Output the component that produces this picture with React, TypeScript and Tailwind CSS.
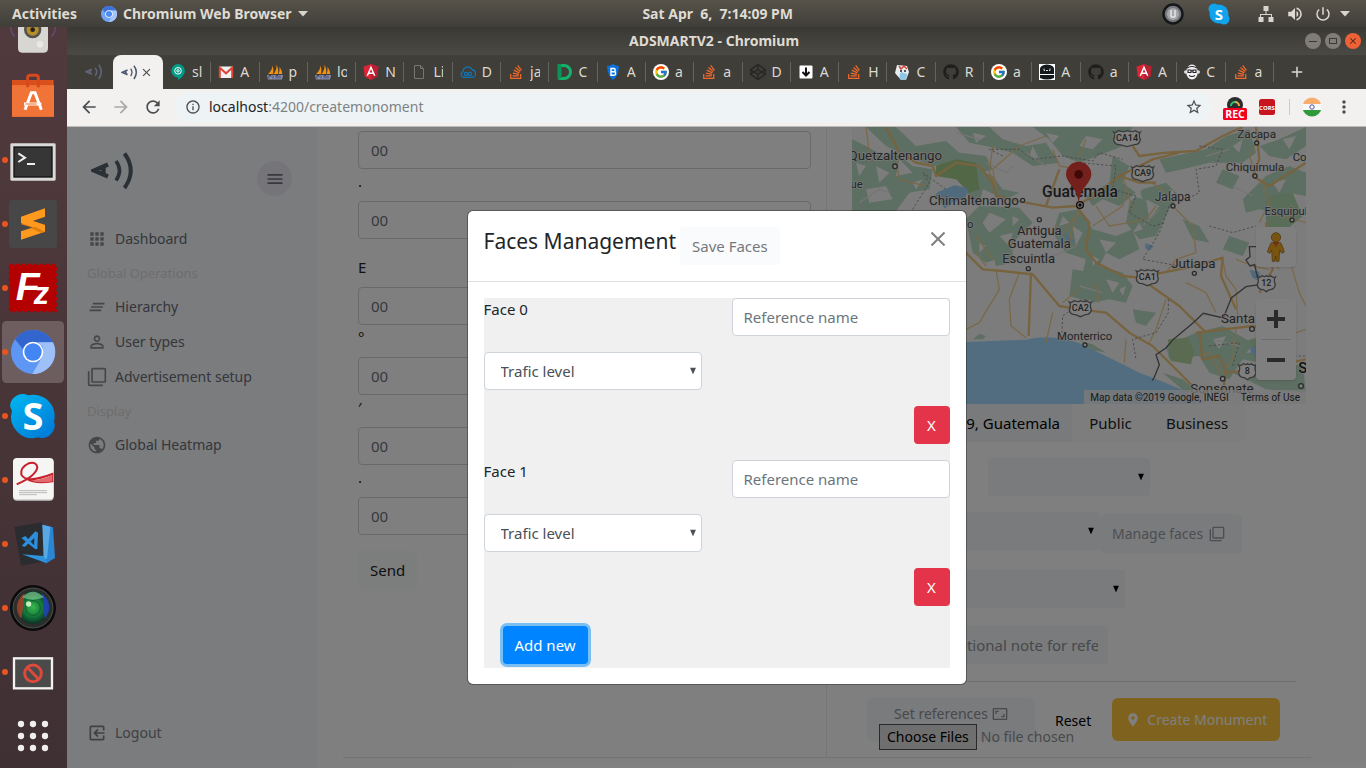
import React from "react";
import {
  MdApps,
  MdAspectRatio,
  MdClearAll,
  MdExitToApp,
  MdFilterNone,
  MdLocationOn,
  MdMenu,
  MdPersonOutline,
  MdPublic,
  MdArrowBack,
  MdArrowForward,
  MdRefresh,
  MdStarBorder,
  MdMoreVert,
  MdInfoOutline,
  MdVolumeUp,
  MdPowerSettingsNew,
  MdClose,
  MdAdd,
} from "react-icons/md";
import { FaStackOverflow, FaGithub, FaCodepen } from "react-icons/fa";
import { FcGoogle } from "react-icons/fc";

/* ---------- favicons ---------- */

const WaveMark = ({ className }: { className: string }) => (
  <svg viewBox="0 0 44 40" className={className} fill="none" stroke="currentColor">
    <path d="M17 13.500 3 19.500 17 25.500M12.500 16V23" strokeWidth="4.400" />
    <path d="M25 10 Q32 19.500 25 29.500" strokeWidth="3.600" />
    <path d="M33.500 2.500 Q46 19.500 33.500 37" strokeWidth="4" />
  </svg>
);

const Angular = () => (
  <svg viewBox="0 0 16 16" className="size-4">
    <path d="M8 0 15.500 2.700 14.300 12.500 8 16 1.700 12.500 .5 2.700Z" fill="#dd2437" />
    <path d="M8 0 15.500 2.700 14.300 12.500 8 16Z" fill="#b81f33" />
    <path d="M4.300 11.700 8 3.300 11.700 11.700M5.800 9.200H10.200" stroke="#fff" strokeWidth="1.500" fill="none" />
  </svg>
);
const Gmail = () => (
  <svg viewBox="0 0 16 16" className="size-4">
    <rect x="1" y="2.500" width="14" height="11.500" fill="#f1f1f1" />
    <path d="M1.800 14V3.800L8 9.300 14.200 3.800V14" fill="none" stroke="#db4437" strokeWidth="2" />
  </svg>
);
const Sails = () => (
  <svg viewBox="0 0 16 16" className="size-4">
    <path d="M1 10Q5 7 5.500 1.500 7 6 6 10ZM6.500 10Q10 6 9.500 .5 12 6 11 10ZM11.500 10Q13 7 12.500 3 15.500 7 15 10Z" fill="#f29111" />
    <path d="M0 11h16l-1 4.500H1Z" fill="#8a8fb0" />
    <path d="M2 14.500v-3h2v1.500M6 11.500v3M9 14.500v-3h2v3M13 14.500v-3" stroke="#3c3c5a" strokeWidth=".9" fill="none" />
  </svg>
);
const Hangouts = () => (
  <svg viewBox="0 0 16 16" className="size-4">
    <path d="M8 0a6.800 6.800 0 0 1 6.800 6.800C14.800 11 11 14.500 8 16v-2.600A6.700 6.700 0 0 1 8 0Z" fill="#009c87" />
    <circle cx="8" cy="6.800" r="3.300" fill="none" stroke="#fff" strokeWidth="1" />
    <circle cx="8" cy="6.800" r="1.200" fill="none" stroke="#fff" strokeWidth="1" />
  </svg>
);
const Doc = () => (
  <svg viewBox="0 0 16 16" className="size-4" fill="none" stroke="#77756f">
    <path d="M3.500 1.500h6l3 3v10h-9zM9.500 1.500v3h3" />
  </svg>
);
const Cloud = () => (
  <svg viewBox="0 0 16 16" className="size-4" fill="none" stroke="#1273b4" strokeWidth="1.300">
    <path d="M3.500 13.300A3 3 0 0 1 3 7.600 4.800 4.800 0 0 1 12 5.500a4 4 0 0 1 .8 7.800Z" />
    <circle cx="6" cy="10" r="1.700" />
    <circle cx="9.800" cy="10" r="1.700" />
  </svg>
);
const GreenD = () => (
  <svg viewBox="0 0 16 16" className="size-4">
    <path d="M3 1.500h5a6.500 6.500 0 0 1 0 13H3" fill="none" stroke="#13b36b" strokeWidth="3" />
    <path d="M1.500 0v16l4-2V0Z" fill="#0c9458" />
  </svg>
);
const Shield = () => (
  <svg viewBox="0 0 16 16" className="size-4">
    <path d="M8 0q3 2 6 2-.5 10-6 14Q2.500 12 2 2 5 2 8 0Z" fill="#0a72d8" />
    <path d="M6 4.500h2.600a1.600 1.600 0 0 1 0 3.300H6zM6 7.800h3a1.600 1.600 0 0 1 0 3.400H6z" fill="none" stroke="#fff" strokeWidth="1.400" />
  </svg>
);
const Download = () => (
  <svg viewBox="0 0 16 16" className="size-4">
    <rect x="1.500" y="1.500" width="13" height="13" rx="1" fill="#fff" />
    <path d="M8 3.500v8M4.500 8 8 11.500 11.500 8" fill="none" stroke="#111" strokeWidth="2" />
  </svg>
);
const Robot = () => (
  <svg viewBox="0 0 16 16" className="size-4">
    <path d="M0 0h16v16H0z" fill="#fff" />
    <path d="M1 5q0-4 7-4.500Q15 1 15 5v5H1z" fill="#15181d" />
    <path d="M1 11h14v3q-7 3-14 0z" fill="#15181d" />
    <path d="M5 4.500v2h1M11 4.500v2h-1M7 6.500h2" stroke="#ddd" fill="none" />
  </svg>
);
const Monkey = () => (
  <svg viewBox="0 0 16 16" className="size-4">
    <circle cx="1.800" cy="8" r="1.800" fill="#ddd" />
    <circle cx="14.200" cy="8" r="1.800" fill="#ddd" />
    <ellipse cx="8" cy="8" rx="5.800" ry="7.500" fill="#f2f2f2" />
    <path d="M3 4q5-3 10 0M4 6h3v2.500H4zM9 6h3v2.500H9zM7 7h2M5 11.500q3 2 6 0" fill="none" stroke="#222" strokeWidth="1.100" />
  </svg>
);
const Face = () => (
  <svg viewBox="0 0 16 16" className="size-4">
    <path d="M3 1l10 1 2 6-3 8H7L1 9Z" fill="#e9edf0" />
    <path d="M5 2l2 3 3-3 3 3" stroke="#d2463c" strokeWidth="1.500" fill="none" />
    <path d="M7 16q-3-4 0-8l6 2-1 6z" fill="#8fc7e6" />
    <circle cx="7" cy="7" r="1" fill="#222" />
    <circle cx="11" cy="7" r="1" fill="#222" />
  </svg>
);
const Stack = () => <FaStackOverflow className="size-4 text-[#f2692a]" />;
const Github = () => <FaGithub className="size-4 text-[#1f1f1e]" />;
const Google = () => (
  <span className="flex size-4 items-center justify-center rounded-full bg-white">
    <FcGoogle className="size-3.5" />
  </span>
);
const Codepen = () => <FaCodepen className="size-4 text-[#262625]" />;

const tabs: { label: string; Icon: () => React.JSX.Element }[] = [
  { label: "sl", Icon: Hangouts },
  { label: "A", Icon: Gmail },
  { label: "p", Icon: Sails },
  { label: "lo", Icon: Sails },
  { label: "N", Icon: Angular },
  { label: "Li", Icon: Doc },
  { label: "D", Icon: Cloud },
  { label: "ja", Icon: Stack },
  { label: "C", Icon: GreenD },
  { label: "A", Icon: Shield },
  { label: "a", Icon: Google },
  { label: "a", Icon: Stack },
  { label: "D", Icon: Codepen },
  { label: "A", Icon: Download },
  { label: "H", Icon: Stack },
  { label: "C", Icon: Face },
  { label: "R", Icon: Github },
  { label: "a", Icon: Google },
  { label: "A", Icon: Robot },
  { label: "a", Icon: Github },
  { label: "A", Icon: Angular },
  { label: "C", Icon: Monkey },
  { label: "a", Icon: Stack },
];

/* ---------- desktop shell ---------- */

function TopBar() {
  return (
    <header className="flex h-[27px] shrink-0 items-center bg-linear-to-b from-[#57534a] to-[#403e39] pr-4 pl-3 text-sm font-bold text-[#dfdbd2]">
      <div className="flex flex-1 items-center">
        <button>Activities</button>
        <button className="ml-6 flex items-center gap-1.5">
          <ChromiumMark className="size-4" />
          Chromium Web Browser
          <Caret />
        </button>
      </div>
      <time className="whitespace-pre">Sat Apr  6,  7:14:09 PM</time>
      <div className="flex w-[557px] items-center justify-end">
        <svg viewBox="0 0 22 22" className="mr-6 size-[22px]">
          <circle cx="11" cy="11" r="9.500" fill="#77797c" stroke="#15171a" strokeWidth="2.500" />
          <circle cx="11" cy="11" r="6" fill="#a4a7ab" />
          <path d="M9 7v7M13 7v7M9 14h4" stroke="#e6e6e6" strokeWidth="1.500" fill="none" />
        </svg>
        <svg viewBox="0 0 22 22" className="mr-7 size-[22px]">
          <g fill="#10a4ee">
            <circle cx="6" cy="6" r="5.500" />
            <circle cx="16" cy="16" r="5.500" />
            <circle cx="11" cy="11" r="9.500" />
          </g>
          <text x="11" y="16.500" textAnchor="middle" fontSize="15" fontWeight="700" fill="#fff" fontFamily="Open Sans, sans-serif">S</text>
        </svg>
        <svg viewBox="0 0 16 16" className="mr-3 size-4" fill="#d8d5cd">
          <path d="M5.500 0h5v5h-5zM.5 11h5v5h-5zM10.500 11h5v5h-5zM7.500 5h1v3h5.500v3h-1V9H3v2H2V8h5.500z" />
        </svg>
        <MdVolumeUp className="mr-2.5 size-[18px]" />
        <MdPowerSettingsNew className="mr-2 size-[18px]" />
        <Caret />
      </div>
    </header>
  );
}

const Caret = () => (
  <svg viewBox="0 0 10 6" className="h-1.5 w-2.5" fill="#d8d5cd">
    <path d="M0 0h10L5 5.500z" />
  </svg>
);

function ChromiumMark({ className }: { className: string }) {
  return (
    <svg viewBox="0 0 132 132" className={className}>
      <circle cx="66" cy="66" r="66" fill="#6fa3f5" />
      <path d="M66 0A66 66 0 0 1 126 37H66L38 60 12 28A66 66 0 0 1 66 0Z" fill="#3f70d8" />
      <path d="M126 37A66 66 0 0 1 64 132L93 82 96 50 80 37Z" fill="#a3c5fa" />
      <circle cx="66" cy="66" r="31" fill="#fff" />
      <circle cx="66" cy="66" r="25" fill="#4b8bf5" />
    </svg>
  );
}

const dockFont = "Open Sans, sans-serif";

const dockItems: { name: string; running: boolean; art: React.ReactNode }[] = [
  {
    name: "Ubuntu Software",
    running: false,
    art: (
      <>
        <path d="M36 48h124l2 110H36z" fill="#ef6a30" />
        <path d="M36 48h122v16H36z" fill="#d9501f" />
        <path d="M36 64h126v94H36z" fill="#f07337" />
        <path d="M83 70V42q0-8 8-8h16q8 0 8 8v28" fill="none" stroke="#d9481c" strokeWidth="9" />
        <path d="M75 137 94 86h11l19 51M72 120h52" fill="none" stroke="#fff" strokeWidth="9" />
        <path d="M76 120h34" stroke="#ef6a30" strokeWidth="3" />
      </>
    ),
  },
  {
    name: "Terminal",
    running: true,
    art: (
      <>
        <rect x="31" y="46" width="136" height="112" rx="4" fill="#d9d9d7" />
        <rect x="40" y="55" width="118" height="94" fill="#111" />
        <rect x="44" y="59" width="110" height="86" fill="#353635" />
        <path d="M55 76l20 13-20 13M81 108h24" fill="none" stroke="#eee" strokeWidth="6" />
      </>
    ),
  },
  {
    name: "Sublime Text",
    running: true,
    art: (
      <>
        <rect x="27" y="24" width="144" height="144" rx="8" fill="#474747" />
        <path d="M63 97l72 21v-20L98 86z" fill="#d97c12" />
        <path d="M63 74 135 49v25L98 87l37 13v19L63 143v-25l37-12-37-12z" fill="#ff9a1f" />
        <path d="M92 108l14-4 29 15-12 4z" fill="#e07f10" />
      </>
    ),
  },
  {
    name: "FileZilla",
    running: true,
    art: (
      <>
        <rect x="30" y="27" width="138" height="138" fill="#b30000" stroke="#b30000" strokeWidth="7" strokeDasharray="11 7" />
        <text x="97" y="132" textAnchor="middle" fontSize="118" fontWeight="700" fontStyle="italic" fill="#fff" fontFamily="Liberation Sans, sans-serif">
          F<tspan fontSize="92" dy="12" dx="-18">z</tspan>
        </text>
      </>
    ),
  },
  {
    name: "Chromium",
    running: true,
    art: (
      <>
        <rect x="6" y="3" width="186" height="186" rx="14" fill="#fff" opacity=".2" />
        <g transform="translate(33 30)">
          <circle cx="66" cy="66" r="66" fill="#5e97f3" />
          <path d="M66 0A66 66 0 0 1 126 37H66L38 60 12 28A66 66 0 0 1 66 0Z" fill="#3365cf" />
          <path d="M126 37A66 66 0 0 1 64 132L93 82 96 50 80 37Z" fill="#9dc0f9" />
          <circle cx="66" cy="66" r="31" fill="#fff" />
          <circle cx="66" cy="66" r="26" fill="#4485f4" />
        </g>
      </>
    ),
  },
  {
    name: "Skype",
    running: true,
    art: (
      <>
        <linearGradient id="sky" gradientUnits="userSpaceOnUse" x1="40" y1="26" x2="150" y2="166">
          <stop offset="0" stopColor="#00b7f0" />
          <stop offset="1" stopColor="#0078d7" />
        </linearGradient>
        <path
          d="M30 64A38 38 0 0 1 84 34 64 64 0 0 1 162 112 38 38 0 0 1 114 160 64 64 0 0 1 36 80 38 38 0 0 1 30 64Z"
          fill="url(#sky)"
        />
        <text x="99" y="137" textAnchor="middle" fontSize="114" fontWeight="700" fill="#fff" fontFamily={dockFont}>S</text>
      </>
    ),
  },
  {
    name: "Document Viewer",
    running: true,
    art: (
      <>
        <rect x="39" y="32" width="122" height="126" rx="12" fill="#c9c9c8" />
        <rect x="39" y="30" width="122" height="124" rx="12" fill="#f5f5f4" />
        <path d="M50 109Q108 84 112 58 110 40 86 46 60 58 64 80 78 108 157 78v22Q104 108 80 92" fill="none" stroke="#c8202c" strokeWidth="6" />
        <path d="M92 98q40-4 65-18v20q-30 6-65-2z" fill="#e06a70" />
        <path d="M57 128h84M57 134h84M57 140h54" stroke="#bbb" strokeWidth="3" />
      </>
    ),
  },
  {
    name: "Visual Studio Code",
    running: true,
    art: (
      <>
        <path d="M43 45l82-14 16 30 14 84-92 16z" fill="#2b2c2f" />
        <path d="M127 38l32 8 6 92-26 16-8-14 2-60z" fill="#2a86d2" />
        <path d="M127 38l24 6-10 96-10 2z" fill="#57a9e6" />
        <path d="M66 127l66 5 8 22z" fill="#2f93dd" />
        <path d="M64 78l12-6 36 38-6 2zM106 58l8 4-2 50-10-6 1-28-28 26-10-2z" fill="#2b8fdc" />
      </>
    ),
  },
  {
    name: "Camera",
    running: true,
    art: (
      <>
        <radialGradient id="lens">
          <stop offset="0" stopColor="#37b84c" />
          <stop offset=".6" stopColor="#14743a" />
          <stop offset="1" stopColor="#0b3326" />
        </radialGradient>
        <circle cx="99" cy="96" r="69" fill="#0b0b0b" />
        <circle cx="99" cy="96" r="60" fill="#2c2d2d" stroke="#666" strokeWidth="2" />
        <circle cx="99" cy="94" r="49" fill="url(#lens)" />
        <path d="M74 52A49 49 0 0 0 64 128q6-36 10-76z" fill="#a8402a" opacity=".85" />
        <path d="M126 53a49 49 0 0 1 8 75q-2-38-8-75z" fill="#2342c0" opacity=".85" />
        <path d="M66 64q33-34 66 0-33 14-66 0z" fill="#8fd6a0" opacity=".6" />
        <circle cx="99" cy="96" r="22" fill="none" stroke="#0e5c2a" strokeWidth="3" />
        <circle cx="86" cy="84" r="8" fill="#c8f0c0" />
      </>
    ),
  },
  {
    name: "Screen Recorder",
    running: true,
    art: (
      <>
        <rect x="42" y="55" width="114" height="90" fill="#4a4a4a" stroke="#f2f2f2" strokeWidth="7" />
        <circle cx="99" cy="100" r="25" fill="none" stroke="#dd4a3c" strokeWidth="9" />
        <path d="M82 82l34 36" stroke="#dd4a3c" strokeWidth="9" />
      </>
    ),
  },
  {
    name: "Show Applications",
    running: false,
    art: (
      <g fill="#f0efee">
        {[60, 96, 132].map((y) => [63, 99, 135].map((x) => <circle key={`${x}-${y}`} cx={x} cy={y} r="9.500" />))}
      </g>
    ),
  },
];

function Dock() {
  return (
    <nav className="flex w-[67px] shrink-0 flex-col bg-linear-to-b from-[#513a3e] to-[#3f3033]">
      <svg viewBox="0 81 201 111" className="h-[37px] w-full">
        <path d="M44 110q-12-10-12-34M154 110q12-10 12-34" stroke="#5c5068" strokeWidth="5" fill="none" />
        <path d="M54 60h90v84q0 14-12 14H66q-12 0-12-14z" fill="#d8d6d3" />
        <circle cx="98" cy="89" r="26" fill="#55514d" />
        <circle cx="98" cy="89" r="18" fill="#b58e2a" />
        <circle cx="98" cy="89" r="7" fill="#222" />
        <circle cx="120" cy="133" r="12" fill="#e8e7e5" stroke="#bbb" />
      </svg>
      {dockItems.map(({ name, running, art }) => (
        <button key={name} aria-label={name} className="h-16">
          <svg viewBox="0 0 201 192" className="h-16 w-full">
            {art}
            {running && <circle cx="15" cy="96" r="9" fill="#e95420" />}
          </svg>
        </button>
      ))}
    </nav>
  );
}

function BrowserChrome() {
  return (
    <>
      <div className="flex h-7 shrink-0 items-center bg-linear-to-b from-[#3b3934] to-[#4b4943] pr-[5px] text-sm font-bold text-[#dfdbd2]">
        <div className="flex-1" />
        <h1>ADSMARTV2 - Chromium</h1>
        <div className="flex flex-1 justify-end gap-1">
          <button aria-label="Minimise" className="flex size-4 items-center justify-center rounded-full bg-[#7f7d76]">
            <span className="h-px w-2 bg-[#3b3934]" />
          </button>
          <button aria-label="Maximise" className="flex size-4 items-center justify-center rounded-full bg-[#7f7d76]">
            <span className="h-1.5 w-2 border border-[#3b3934]" />
          </button>
          <button aria-label="Close window" className="flex size-4 items-center justify-center rounded-full bg-[#ee6136] text-[#4a2416]">
            <MdClose className="size-2.5" />
          </button>
        </div>
      </div>
      <div className="flex h-[34px] shrink-0 bg-[#403e39] text-sm text-[#dcd9d2]">
        <div className="flex w-[46px] items-center pl-[18px]">
          <WaveMark className="size-[18px] text-[#5f6678]" />
        </div>
        <div className="flex w-[50px] items-center gap-0.5 rounded-t-lg bg-[#f2f1f0] pl-2">
          <WaveMark className="size-[17px] text-[#4d5a70]" />
          <button aria-label="Close tab" className="text-[#4a4a4a]">
            <MdClose className="size-[13px]" />
          </button>
        </div>
        <div className="flex flex-1 items-center">
          {tabs.map(({ label, Icon }, i) => (
            <div key={i} className="flex h-5 min-w-0 flex-1 items-center gap-1.5 border-r border-[#66645e] pl-[7px]">
              <Icon />
              <span className="w-2.5 overflow-hidden whitespace-nowrap">{label}</span>
            </div>
          ))}
        </div>
        <button aria-label="New tab" className="flex w-[92px] items-center pl-3.5">
          <MdAdd className="size-[18px]" />
        </button>
      </div>
      <div className="flex h-[38px] shrink-0 items-center border-b border-[#b9bcbb] bg-[#f2f1f0] pr-3 pb-0.5 pl-3 text-[#4b4d4f]">
        <button aria-label="Back"><MdArrowBack className="size-5" /></button>
        <button aria-label="Forward" className="ml-3 text-[#a8a8a8]"><MdArrowForward className="size-5" /></button>
        <button aria-label="Reload" className="ml-3"><MdRefresh className="size-5" /></button>
        <div className="ml-3 flex h-[30px] flex-1 items-center rounded-full bg-[#eef3f5] pr-2 pl-2.5">
          <MdInfoOutline className="mr-2 size-4" />
          <p className="flex-1 text-sm text-[#7d8286]">
            <span className="text-[#222]">localhost</span>:4200/createmonoment
          </p>
          <MdStarBorder className="size-[18px]" />
        </div>
        <svg viewBox="0 0 24 26" className="ml-3 h-[26px] w-6">
          <circle cx="12" cy="11" r="8" fill="#2b2d31" />
          <path d="M8 12a4 4 0 0 1 4-4" stroke="#27c06a" strokeWidth="2" fill="none" />
          <path d="M12 8a4 4 0 0 1 4 4" stroke="#e0b23a" strokeWidth="2" fill="none" />
          <rect x="0" y="14" width="24" height="12" rx="1.500" fill="#f5001e" />
          <text x="12" y="24" textAnchor="middle" fontSize="10.500" fontWeight="700" fill="#fff" fontFamily={dockFont}>REC</text>
        </svg>
        <svg viewBox="0 0 16 16" className="ml-3 size-4">
          <rect width="16" height="16" rx="2.500" fill="#c8141e" />
          <text x="8" y="10.500" textAnchor="middle" fontSize="6" fontWeight="700" fill="#fff" fontFamily={dockFont}>CORS</text>
        </svg>
        <span className="ml-3.5 mr-3 h-4 w-px bg-[#cccac7]" />
        <svg viewBox="0 0 20 20" className="size-5">
          <clipPath id="flag"><circle cx="10" cy="10" r="9.500" /></clipPath>
          <g clipPath="url(#flag)">
            <path d="M0 0h20v7H0z" fill="#f7ae6c" />
            <path d="M0 7h20v6H0z" fill="#fafafa" />
            <path d="M0 13h20v7H0z" fill="#2f9a3a" />
          </g>
          <circle cx="10" cy="10" r="2.200" fill="none" stroke="#4b55a8" />
        </svg>
        <button aria-label="Menu" className="ml-3"><MdMoreVert className="size-5" /></button>
      </div>
    </>
  );
}

/* ---------- application ---------- */

const navItem = "flex h-[35px] items-center gap-2 text-sm text-[#6a6e76]";
const navHead = "h-[33px] pt-2 text-[13px] text-[#dcdcda]";

function Sidebar() {
  return (
    <aside className="flex w-[250px] shrink-0 flex-col bg-[#f6f8fc] px-5 pt-6 pb-[18px]">
      <div className="mb-[30px] flex items-start justify-between pr-[5px] pl-1">
        <WaveMark className="h-[40px] w-[44px] text-[#56606f]" />
        <button aria-label="Toggle menu" className="mt-2.5 flex size-[35px] items-center justify-center rounded-full bg-[#eaebf2] text-[#6f727c]">
          <MdMenu className="size-5" />
        </button>
      </div>
      <nav className="-mt-[5px] flex flex-1 flex-col">
        <a href="#dashboard" className={navItem}><MdApps className="size-5 text-[#8a8d92]" />Dashboard</a>
        <p className={navHead}>Global Operations</p>
        <a href="#hierarchy" className={navItem}><MdClearAll className="size-5 text-[#8a8d92]" />Hierarchy</a>
        <a href="#users" className={navItem}><MdPersonOutline className="size-5 text-[#8a8d92]" />User types</a>
        <a href="#setup" className={navItem}><MdFilterNone className="size-5 text-[#8a8d92]" />Advertisement setup</a>
        <p className={navHead}>Display</p>
        <a href="#heatmap" className={navItem}><MdPublic className="size-5 text-[#8a8d92]" />Global Heatmap</a>
        <a href="#logout" className="mt-auto flex h-[35px] items-center gap-2 text-sm text-[#7f8287]">
          <MdExitToApp className="size-5 -scale-x-100" />Logout
        </a>
      </nav>
    </aside>
  );
}

function Coordinate({ id, label, first }: { id: string; label: string; first?: boolean }) {
  return (
    <>
      {label && (
        <label htmlFor={id} className={first ? "mt-4 mb-2 block h-6 leading-6" : "mb-2 block h-6 leading-6"}>
          {label}
        </label>
      )}
      <input
        id={id}
        aria-label={label ? undefined : "Degrees"}
        placeholder="00"
        className="block h-[38px] w-full rounded border border-[#ced4da] bg-white px-3 placeholder:text-[#6c757d]"
      />
    </>
  );
}

const greens = [
  "18,40 60,60 110,90 150,80 200,120 260,130 250,190 190,200 150,255 18,255",
  "60,3 150,3 210,60 300,45 340,80 420,90 440,130 380,150 330,110 270,120 200,100 120,60",
  "330,3 430,3 470,40 540,60 600,50 640,110 560,120 500,80 420,60 370,50",
  "560,3 860,3 830,60 780,80 700,110 650,90 610,40",
  "370,120 440,150 470,190 520,200 480,220 410,190 400,240 360,200",
  "400,240 520,245 560,290 510,340 480,390 420,410 380,380 360,280",
  "640,260 700,250 740,310 810,330 860,310 880,370 820,400 780,380 760,420 830,440 860,480 840,530 790,520 740,530 700,480 720,400 660,380 620,320",
  "680,430 740,440 800,480 780,510 720,525 670,510",
  "890,190 960,170 1000,210 970,250 930,330 880,340 840,290 850,230",
  "800,90 850,120 830,170 870,200 820,240 770,220 740,240 720,210 790,170",
  "940,100 1080,70 1140,30 1210,10 1230,80 1190,110 1090,110 1010,130 960,140",
  "1130,130 1180,150 1160,190 1110,170",
  "1260,150 1330,120 1380,140 1380,210 1330,200 1290,260 1240,250 1200,260 1190,220",
  "1240,60 1300,40 1380,3 1380,60 1320,100 1270,90",
  "1010,280 1060,300 1090,350 1040,340",
  "1150,330 1210,350 1190,390 1130,370",
  "1050,620 1130,600 1200,640 1260,660 1240,710 1190,700 1150,760 1090,740 1060,690 970,700 960,660",
  "1160,740 1260,700 1370,720 1380,800 1260,790",
  "950,740 1010,760 1060,800 1020,800",
  "440,380 500,370 500,410 450,420",
  "860,550 930,560 900,600 870,590",
  "700,645 740,655 780,680 740,672",
  "380,640 400,624 420,630 410,640",
];
const minorRoads =
  "M60 3L70 80 90 110M150 90L160 160 240 180M440 60L430 140 460 200M450 180L440 130 520 60 600 30M620 70L640 120 700 130M720 40L700 90M750 240L790 300 850 290 900 280 930 240M700 260L650 320 630 300M690 260L670 350M740 300L830 240 840 200M830 150L860 250M900 160L950 190 960 220M980 240L1040 300 1050 380M1050 380L990 400 960 440M1130 400L1140 450 1170 490 1175 570M1170 400L1220 420 1270 430M1020 470L1080 500 1110 560M960 520L930 610 910 650M840 640L835 710M1240 30L1210 90 1230 150M1250 170L1270 230 1240 290M1330 400L1360 500 1380 540M1250 380L1300 430M450 430L460 490 400 590 360 610M520 440L490 520 495 600 540 635M620 560L600 650M390 330L440 400M420 420L390 380M1060 690L1090 680 1120 740M1170 610L1160 700 1130 740M1270 260L1380 290M1290 640L1380 610M700 490L650 530M750 470L760 530";
const mainRoads =
  "M120 3L160 80 210 110 260 120 270 150 330 110 400 120 440 170 450 210 540 230 620 245 690 240 760 200 820 150 880 170 930 170M600 240L640 130M690 240L730 290 720 370 750 410 830 450 880 455 1000 540 1050 590 1080 620M360 380L410 430 470 435 560 445 640 540 700 550 780 560 850 620 920 660 980 720 1040 780M555 440L548 630M880 455L950 440 1050 420 1130 395 1125 450 1170 550M860 60L880 90 960 80 1050 75 1130 30 1190 3M820 150L920 100 1000 80M1230 3L1240 100 1220 150 1270 180 1380 110M1050 620L1220 600 1260 610M1060 620L1070 700 1120 690 1140 740 1130 800M1260 290L1280 430 1240 500M1140 740L1240 730 1380 700";

const places: [string, number, number, number, number, number][] = [
  ["Zacapa", 1232, 37, 35, 1232, 51],
  ["Chiquimula", 1227, 135, 35, 1227, 150],
  ["Jalapa", 980, 225, 36, 981, 240],
  ["Jutiapa", 1042, 426, 40, 1045, 442],
  ["Escuintla", 548, 410, 39, 547, 428],
  ["Monterrico", 716, 641, 34, 717, 657],
];

const shields: [string, number, number, number][] = [
  ["CA14", 843, 36, 80],
  ["CA9", 890, 141, 66],
  ["CA1", 904, 453, 66],
  ["CA2", 703, 546, 66],
  ["12", 1261, 471, 54],
  ["8", 1204, 735, 52],
];

function MapView() {
  return (
    <div className="relative h-[277px] w-[454px] font-[Roboto,sans-serif]">
      <svg viewBox="18 3 1362 831" className="h-full w-full bg-[#f9f9f9]">
        <g fill="#bbdcc4">
          {greens.map((points) => <polygon key={points} points={points} />)}
        </g>
        <g fill="#f9f9f9">
          <path d="M90 120l40 20-30 30zM160 100l40 40-50 10zM60 190l60-10 20 40-70 10zM430 260l50 20-50 40-20-30zM460 330l40-10-10 40zM680 300l30 20-20 40zM760 340l50 10-30 30zM720 30l50 10-30 30-40-10zM480 20l50 20-30 10zM900 220l40 20-30 40zM780 460l40 10-20 30zM1280 170l40-10-20 40zM1310 40l40-10-20 40zM560 60l20 40-30-10z" />
          <path d="M30 110l30 10-20 30zM200 170l30-10-20 30zM380 20l40 10-30 20zM600 20l40 10-20 20zM800 20l30 10-20 20zM650 270l20 20-30 10zM740 390l20 10-20 20zM860 320l20-30 10 20zM860 210l20-20 10 30zM1160 60l30-20-10 40zM980 190l10 20-30 10zM1100 640l40-10-20 40zM1200 680l20-20 10 20zM820 490l20-10-10 30zM400 350l20 10-20 20zM500 270l20 10-20 20z" />
        </g>
        <path d="M270 120l60-20 60 10 10 80-30 10-40-40-60-10z" fill="#a4cf8c" />
        <path d="M965 640l60-5 20 40-10 40-60-10z" fill="#b4d6a4" />
        <path d="M1210 640l60-10 10 50-50 30zM1260 210l80-10 30 70-60 50-50-20z" fill="#b4dbb0" />
        <g stroke="#e6eae7" strokeWidth="4" fill="none">
          <path d="M40 230l60-40 30 10M330 20l70 20M420 110l60 30 20-20M600 400l90-40M700 480l70 20M890 300l50-50M1080 90l70-20M1100 640l80 20M1260 760l60-10M540 80l60 40M1160 180l60 30" />
        </g>
        <path d="M18 648H360L540 641Q620 622 700 652 800 700 880 740 960 770 1010 792L1060 834H18Z" fill="#a2dafe" />
        <g fill="#9fd2fb">
          <path d="M276 198l50-20 38 8-4 28-40 14-24 20-14-24-20-10zM655 320l20 15 12 15-25-6zM898 352l25 8-10 12-15-4zM1210 432l30 5 5 30-25-12zM1213 665l30-10v30h-28z" />
        </g>
        <path d={minorRoads} fill="none" stroke="#f3d293" strokeWidth="4" strokeLinejoin="round" />
        <path d={mainRoads} fill="none" stroke="#efc67c" strokeWidth="7" strokeLinejoin="round" />
        <path
          d="M200 250L250 170 230 140 300 190M470 90L430 70 520 70 560 100 650 90 740 105 760 80 830 100M700 110L810 120 800 190 870 210 850 260 920 300 960 290M970 240L940 320 890 400 1000 420M720 520L650 570 648 620M967 520V560L930 620 860 640 870 700M1060 60L1130 70 1110 120 1050 130 1060 200 1000 230M1090 300L1160 320 1230 300M1290 610L1310 690 1380 690M1090 660L1180 650 1160 720"
          fill="none"
          stroke="#999"
          strokeWidth="3"
          strokeDasharray="7 6"
        />
        <path
          d="M1230 362h-20l2 30-12 10 12 18 14-4 6 28 10 22-2 10-40 6-44 34-24 60-60-14-32 30-60 50-20 24-30 20 10 30-16 40-6 8"
          fill="none"
          stroke="#666"
          strokeWidth="4"
        />
        <g fill="#4a4a4a" textAnchor="middle" paintOrder="stroke" stroke="#f4f4f4" strokeWidth="4" strokeLinejoin="round">
          {places.map(([name, x, y, size]) => (
            <text key={name} x={x} y={y} fontSize={size}>{name}</text>
          ))}
          <text x="148" y="101" fontSize="40">Quetzaltenango</text>
          <text x="384" y="236" fontSize="40">Chimaltenango</text>
          <text x="580" y="326" fontSize="39">Antigua</text>
          <text x="580" y="365" fontSize="39">Guatemala</text>
          <text x="1176" y="590" fontSize="40">Santa</text>
          <text x="1128" y="802" fontSize="40">Sonsonate</text>
          <text x="1320" y="266" fontSize="34">Esquipul</text>
          <text x="1361" y="104" fontSize="34">Co</text>
          <text x="32" y="186" fontSize="34">ue</text>
          <text x="373" y="307" fontSize="34">o</text>
          <text x="1370" y="742" fontSize="44" fontWeight="500" fill="#222">S</text>
          <text x="702" y="213" fontSize="47" fontWeight="500" fill="#333">Guatemala</text>
        </g>
        <g fill="#fff" stroke="#555" strokeWidth="4">
          {places.map(([name, , , , cx, cy]) => <circle key={name} cx={cx} cy={cy} r="6" />)}
          <circle cx="147" cy="121" r="7" />
          <circle cx="530" cy="223" r="6" />
          <circle cx="580" cy="281" r="6" />
          <circle cx="1338" cy="282" r="6" />
          <circle cx="1218" cy="609" r="7" />
          <circle cx="1130" cy="758" r="7" />
          <circle cx="1365" cy="780" r="7" />
        </g>
        {shields.map(([name, x, y, w]) => (
          <g key={name}>
            <path
              d={`M${x - w / 2} ${y - 18}q8 4 14-4 ${w / 4 - 4} 6 ${w / 2 - 14} 0 ${w / 4 - 4} 6 ${w / 2 - 14} 0 6 8 14 4 -6 10 0 22 -2 16-18 16l-${w / 2 - 18} 6-${w / 2 - 18}-6q-18 0-18-16 6-12 0-22z`}
              fill="#fff"
              stroke="#777"
              strokeWidth="4"
            />
            <text x={x} y={y + 10} textAnchor="middle" fontSize="27" fontWeight="500" fill="#444">{name}</text>
          </g>
        ))}
        <circle cx="702" cy="237" r="10" fill="#fff" stroke="#111" strokeWidth="4" />
        <circle cx="702" cy="237" r="5" fill="#111" />
        <path d="M698 232q-4-36-24-56-14-18-14-31a38 38 0 0 1 76 0q0 13-14 31-20 20-24 56z" fill="#e9423a" />
        <circle cx="698" cy="145" r="13" fill="#7c1512" />
      </svg>
      <div className="absolute right-2.5 bottom-6 flex w-10 flex-col items-center rounded-sm bg-white text-[#555] shadow">
        <button aria-label="Zoom in" className="flex size-10 items-center justify-center">
          <svg viewBox="0 0 18 18" className="size-[18px]"><path d="M0 9h18M9 0v18" stroke="currentColor" strokeWidth="4" /></svg>
        </button>
        <span className="h-px w-[30px] bg-[#dcdcdc]" />
        <button aria-label="Zoom out" className="flex size-10 items-center justify-center">
          <svg viewBox="0 0 18 18" className="size-[18px]"><path d="M0 9h18" stroke="currentColor" strokeWidth="4" /></svg>
        </button>
      </div>
      <button aria-label="Street view" className="absolute top-[100px] right-2.5 flex size-10 items-center justify-center rounded-sm bg-white shadow">
        <svg viewBox="0 0 52 90" className="h-[30px] w-[18px]" fill="#f0a920" stroke="#8a6420" strokeWidth="2">
          <path d="M12 32h28q8 14 11 28l-8 4-6-10-2 34h-8l-2-16-2 16h-8l-2-34-5 10-8-4q4-14 12-28z" />
          <path d="M16 30h20L25 46z" fill="#e5672c" stroke="none" />
          <circle cx="26" cy="16" r="14" />
        </svg>
      </button>
      <div className="absolute right-0 bottom-0 flex h-3.5 items-center gap-3 bg-[#f5f5f5]/80 px-1.5 text-[10px] text-[#333]">
        <span>Map data ©2019 Google, INEGI</span>
        <a href="#terms">Terms of Use</a>
      </div>
    </div>
  );
}

function Picker({ label, value, className, selectClass }: { label: string; value?: string; className: string; selectClass: string }) {
  return (
    <div className={`relative h-[38px] ${className}`}>
      <select aria-label={label} className={`h-full w-full appearance-none rounded pr-6 pl-4 ${selectClass}`}>
        <option>{value ?? ""}</option>
      </select>
      <svg viewBox="0 0 6 7" className="pointer-events-none absolute top-1/2 right-1.5 h-[7px] w-1.5 -translate-y-1/2" fill="currentColor">
        <path d="M0 0h6L3 7z" />
      </svg>
    </div>
  );
}

const softSelect = "bg-[#f5f7fa]";

function CreateMonument() {
  return (
    <main className="min-w-0 flex-1 overflow-hidden pr-[55px] pl-[26px]">
      <div className="flex h-[631px] border-b border-[#e3e6ea]">
        <section className="flex-1 border-r border-[#ececee] px-[15px] pt-1 text-[15px] text-[#212529]">
          <Coordinate id="n-deg" label="" />
          <Coordinate id="n-min" label="." />
          <Coordinate id="e-deg" label="E" first />
          <Coordinate id="e-min" label="°" />
          <Coordinate id="e-sec" label="′" />
          <Coordinate id="e-dec" label="." />
          <button className="mt-4 h-[38px] rounded bg-[#f8fafa] px-3">Send</button>
        </section>
        <section className="w-[484px] pl-[25px] text-[15px]">
          <MapView />
          <div className="flex h-[38px] w-[393px] overflow-hidden rounded-b bg-[#f8faf9] text-[#212529]">
            <div className="flex flex-1 items-center justify-end bg-[#f3f5f7] pr-3 text-black">9, Guatemala</div>
            <button className="w-[77px]">Public</button>
            <button className="w-24">Business</button>
          </div>
          <div className="mt-4 flex pl-[136px]">
            <Picker label="Type" className="w-[162px]" selectClass={softSelect} />
          </div>
          <div className="mt-4 flex items-start">
            <Picker label="Faces" className="w-[248px]" selectClass={softSelect} />
            <button className="mt-0.5 flex h-10 w-[142px] items-center justify-start gap-1.5 rounded-md bg-[#f4f6fa] px-3 text-sm text-[#9b9da2]">
              Manage faces <MdFilterNone className="size-4" />
            </button>
          </div>
          <div className="mt-4 flex">
            <Picker label="Category" className="w-[273px]" selectClass={softSelect} />
          </div>
          <div className="mt-[18px] flex pl-[84px]">
            <input
              aria-label="Note"
              placeholder="Optional note for reference"
              className="h-[38px] w-[172px] rounded bg-[#f4f6f8] px-2.5 placeholder:text-[#8e9296]"
            />
          </div>
          <hr className="mt-[17px] mr-[15px] border-[#dcdcdc]" />
          <div className="mt-4 flex pl-[15px]">
            <div className="h-[43px] w-[168px] rounded-md bg-[#f4f6fa] pt-1 text-sm text-[#8f9297]">
              <label htmlFor="references" className="flex h-6 items-center justify-center gap-1">
                Set references <MdAspectRatio className="size-4" />
              </label>
              <input
                id="references"
                type="file"
                multiple
                className="-mt-0.5 ml-3 block h-[26px] w-[210px] file:mr-1 file:h-[26px] file:border file:border-solid file:border-[#555] file:bg-[#dedede] file:px-[7px] file:text-black"
              />
            </div>
            <button className="mt-0.5 ml-5 text-sm text-black">Reset</button>
            <button className="ml-[21px] flex h-[43px] w-[168px] items-center justify-center gap-1.5 rounded-md bg-[#ffc53a] text-sm text-white">
              <MdLocationOn className="size-4" /> Create Monument
            </button>
          </div>
        </section>
      </div>
    </main>
  );
}

function FaceRow({ index }: { index: number }) {
  return (
    <fieldset className="mb-4 grid grid-cols-2 gap-x-[30px] gap-y-4">
      <label htmlFor={`face-${index}`}>Face {index}</label>
      <input
        id={`face-${index}`}
        placeholder="Reference name"
        className="h-[38px] w-full rounded border border-[#ced4da] bg-white px-[11px] placeholder:text-[#6c757d]"
      />
      <Picker label="Trafic level" value="Trafic level" className="text-[#495057]" selectClass="border border-[#ced4da] bg-white" />
      <button
        aria-label={`Remove face ${index}`}
        className="col-start-2 row-start-3 h-[38px] w-9 justify-self-end rounded bg-[#e33449] text-white"
      >
        X
      </button>
    </fieldset>
  );
}

function FacesDialog() {
  return (
    <div role="dialog" aria-label="Faces Management" className="w-[500px] rounded-md border border-black/30 bg-white bg-clip-padding text-[15px] text-[#212529]">
      <div className="flex h-[71px] items-start border-b border-[#dee2e6] p-4">
        <h2 className="mr-1 text-[21px] leading-7">Faces Management</h2>
        <button className="h-[38px] rounded bg-[#fafbfd] px-3 text-[#75787b]">Save Faces</button>
        <button aria-label="Close" className="mt-[5px] mr-[5px] ml-auto text-[#7f7f7f]">
          <svg viewBox="0 0 14 14" className="size-3.5"><path d="M.5.5l13 13M13.500.5l-13 13" stroke="currentColor" strokeWidth="2" /></svg>
        </button>
      </div>
      <div className="p-4">
        <div className="bg-[#f0f0f0] pb-1">
          <FaceRow index={0} />
          <FaceRow index={1} />
          <button className="mt-5 ml-[19px] block h-[38px] w-[85px] rounded bg-[#0084ff] text-white ring-3 ring-[#79bff3]">Add new</button>
        </div>
      </div>
    </div>
  );
}

export default function App() {
  return (
    <div className="flex h-screen flex-col overflow-hidden font-['Noto_Sans',sans-serif]">
      <TopBar />
      <div className="flex min-h-0 flex-1">
        <Dock />
        <div className="flex min-w-0 flex-1 flex-col">
          <BrowserChrome />
          <div className="relative flex min-h-0 flex-1 bg-white">
            <Sidebar />
            <CreateMonument />
            <div className="absolute inset-0 flex items-center justify-center bg-black/50">
              <FacesDialog />
            </div>
          </div>
        </div>
      </div>
    </div>
  );
}
